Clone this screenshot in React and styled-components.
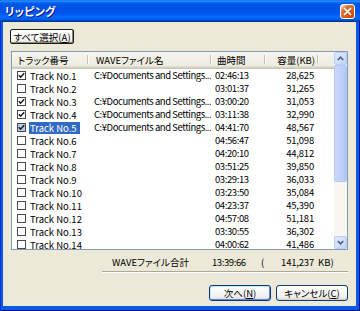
import React from 'react';
import styled, { createGlobalStyle, css } from 'styled-components';

const FONT = `"Noto Sans CJK JP", "Noto Sans", sans-serif`;

const Global = createGlobalStyle`
  html, body { margin: 0; padding: 0; background: #fff; }
  body { font-family: ${FONT}; }
  * { box-sizing: border-box; }
`;

const Window = styled.div`
  width: 360px;
  height: 311px;
  display: flex;
  flex-direction: column;
  font-family: ${FONT};
  font-feature-settings: "palt" 1;
  font-size: 9.5px;
  color: #000;
`;

const TitleBar = styled.div`
  height: 22px;
  flex: none;
  display: flex;
  align-items: center;
  justify-content: space-between;
  padding: 0 5px 0 5px;
  background: linear-gradient(to bottom, #0058ee 0%, #3593ff 4%, #288eff 6%, #127dff 8%, #036ffc 10%, #0262ee 14%, #0057e5 20%, #0054e3 24%, #0055eb 56%, #005bf5 66%, #026afe 76%, #0062ef 86%, #0052d6 92%, #0040ab 94%, #003092 100%);
`;

const TitleText = styled.span`
  color: #fff;
  font-weight: 700;
  font-size: 11px;
  letter-spacing: 0.2px;
  text-shadow: 1px 1px #0f1089;
`;

const CloseButton = styled.div`
  width: 15px;
  height: 15px;
  border: 1px solid #fff;
  border-radius: 3px;
  display: flex;
  align-items: center;
  justify-content: center;
  background: radial-gradient(circle at 90% 90%, #cc4600 0%, #dc6527 55%, #cd7546 70%, #ffccb2 90%, #fff 100%);
`;

const Frame = styled.div`
  flex: 1;
  display: flex;
  padding: 0 4px 5px 3px;
  background: #0a5ae6;
  box-shadow: inset 1px 0 #0831d9, inset -1px 0 #00138c, inset 0 -1px #00138c;
`;

const Body = styled.div`
  flex: 1;
  display: flex;
  flex-direction: column;
  background: #ece9d8;
  padding: 7px 8px 0 8px;
`;

const SelectAll = styled.div`
  align-self: flex-start;
  margin-left: -1px;
  width: 64px;
  height: 15px;
  display: flex;
  align-items: center;
  justify-content: center;
  white-space: nowrap;
  border: 1px solid #1a1a1a;
  border-radius: 2px;
  background: linear-gradient(#fff, #f3f2ee 80%, #dcd8cc);
  box-shadow: inset -1px -1px #8a8778;
`;

const U = styled.span`
  text-decoration: underline;
`;

const ListView = styled.div`
  margin-top: 7px;
  height: 199px;
  border: 1px solid #7f9db9;
  background: #fff;
  display: grid;
  grid-template-columns: 1fr 13px;
  overflow: hidden;
`;

const Table = styled.div`
  display: flex;
  flex-direction: column;
  overflow: hidden;
`;

const cols = css`
  display: grid;
  grid-template-columns: 76px 123px 54px 53px 1fr;
`;

const Header = styled.div`
  ${cols};
  height: 17px;
  flex: none;
  background: linear-gradient(#f6f5f0, #ebeadb);
  box-shadow: inset 0 -1px #cbc7b8, inset 0 -2px #d6d2c2, inset 0 -3px #e2decd;
`;

const HeaderCell = styled.div`
  position: relative;
  display: flex;
  align-items: center;
  padding: 0 ${(p) => (p.$right ? '3px' : '0')} 2px ${(p) => p.$pl || 0}px;
  justify-content: ${(p) => (p.$right ? 'flex-end' : 'flex-start')};
  white-space: nowrap;
  &::after {
    content: '';
    display: ${(p) => (p.$last ? 'none' : 'block')};
    position: absolute;
    right: 0;
    top: 3px;
    bottom: 5px;
    width: 1px;
    background: #c7c5b2;
    box-shadow: 1px 0 #fff;
  }
`;

const Row = styled.div`
  ${cols};
  height: 13px;
  flex: none;
  align-items: center;
`;

const FirstCell = styled.div`
  display: flex;
  align-items: center;
  padding-left: 5px;
  white-space: nowrap;
`;

const Box = styled.div`
  width: 9px;
  height: 9px;
  flex: none;
  border: 1px solid #4a4a4a;
  background: ${(p) => (p.$sel ? '#b7cbf2' : '#fff')};
  display: flex;
  align-items: center;
  justify-content: center;
`;

const Label = styled.span`
  margin-left: 3px;
  padding: 0 3px 0 1px;
  height: 12px;
  line-height: 12px;
  background: ${(p) => (p.$sel ? '#316ac5' : 'transparent')};
  color: ${(p) => (p.$sel ? '#fff' : '#000')};
`;

const Cell = styled.div`
  white-space: nowrap;
  overflow: hidden;
  padding: 0 ${(p) => p.$pr || 0}px 0 ${(p) => p.$pl || 0}px;
  text-align: ${(p) => (p.$right ? 'right' : 'left')};
  letter-spacing: ${(p) => p.$ls || 0}px;
  line-height: 13px;
`;

const Scrollbar = styled.div`
  display: flex;
  flex-direction: column;
  background: #f7f6f1;
`;

const ScrollBtn = styled.div`
  height: 13px;
  flex: none;
  border: 1px solid #bccbf4;
  border-radius: 2px;
  background: linear-gradient(135deg, #e2eafe, #c2d3fc);
  display: flex;
  align-items: center;
  justify-content: center;
`;

const Track = styled.div`
  flex: 1;
  display: flex;
  flex-direction: column;
`;

const Thumb = styled.div`
  height: 117px;
  border: 1px solid #b4c8f6;
  border-radius: 2px;
  background: linear-gradient(90deg, #c9d8fc, #bdd0fa 60%, #b0c6f7);
`;

const Footer = styled.div`
  display: grid;
  grid-template-columns: 101px 100px 49px 8px 45px auto;
  height: 14px;
  line-height: 14px;
  margin-top: 5px;
  white-space: nowrap;
`;

const FooterCell = styled.div`
  text-align: ${(p) => (p.$right ? 'right' : 'left')};
  padding-left: ${(p) => p.$pl || 0}px;
  letter-spacing: ${(p) => p.$ls || 0}px;
`;

const Separator = styled.div`
  margin: 2px 0 0 91px;
  height: 2px;
  border-top: 1px solid #aca899;
  border-bottom: 1px solid #fff;
`;

const ButtonRow = styled.div`
  margin-top: 12px;
  display: flex;
  justify-content: flex-end;
  gap: 5px;
`;

const Button = styled.div`
  width: ${(p) => p.$w}px;
  height: 16px;
  display: flex;
  align-items: center;
  justify-content: center;
  white-space: nowrap;
  border: 1px solid #003c74;
  border-radius: 3px;
  background: linear-gradient(#fff, #f0efea 80%, #d6d0c5);
  box-shadow: ${(p) => (p.$default ? 'inset 1px 1px #cee7ff, inset -1px -1px #6982ee' : 'none')};
`;

const path = 'C:¥Documents and Settings...';
const rows = [
  [1, true, true, '02:46:13', '28,625'],
  [2, false, false, '03:01:37', '31,265'],
  [3, true, true, '03:00:20', '31,053'],
  [4, true, true, '03:11:38', '32,990'],
  [5, true, true, '04:41:70', '48,567'],
  [6, false, false, '04:56:47', '51,098'],
  [7, false, false, '04:20:10', '44,812'],
  [8, false, false, '03:51:25', '39,850'],
  [9, false, false, '03:29:13', '36,033'],
  [10, false, false, '03:23:50', '35,084'],
  [11, false, false, '04:23:37', '45,390'],
  [12, false, false, '04:57:08', '51,181'],
  [13, false, false, '03:30:55', '36,302'],
  [14, false, false, '04:00:62', '41,486'],
];

const Check = () => (
  <svg width="7" height="7" viewBox="0 0 7 7">
    <path d="M0.8 3.2 L2.6 5.2 L6.2 1.2" fill="none" stroke="#1a1a1a" strokeWidth="1.5" />
  </svg>
);

const Arrow = ({ down }) => (
  <svg width="7" height="5" viewBox="0 0 7 5">
    <path d={down ? 'M0.8 1 L3.5 3.8 L6.2 1' : 'M0.8 4 L3.5 1.2 L6.2 4'} fill="none" stroke="#4d6185" strokeWidth="1.6" />
  </svg>
);

export default function App() {
  return (
    <>
      <Global />
      <Window>
        <TitleBar>
          <TitleText>リッピング</TitleText>
          <CloseButton>
            <svg width="9" height="9" viewBox="0 0 9 9">
              <path d="M1 1 L8 8 M8 1 L1 8" stroke="#fff" strokeWidth="1.7" />
            </svg>
          </CloseButton>
        </TitleBar>
        <Frame>
          <Body>
            <SelectAll>
              すべて選択(<U>A</U>)
            </SelectAll>
            <ListView>
              <Table>
                <Header>
                  <HeaderCell $pl={6}>トラック番号</HeaderCell>
                  <HeaderCell $pl={8}>WAVEファイル名</HeaderCell>
                  <HeaderCell $pl={6}>曲時間</HeaderCell>
                  <HeaderCell $right>容量(KB)</HeaderCell>
                  <HeaderCell $last />
                </Header>
                {rows.map(([n, checked, hasPath, time, size]) => {
                  const sel = n === 5;
                  return (
                    <Row key={n}>
                      <FirstCell>
                        <Box $sel={sel}>{checked && <Check />}</Box>
                        <Label $sel={sel}>Track No.{n}</Label>
                      </FirstCell>
                      <Cell $pl={6} $ls={-0.45}>{hasPath ? path : ''}</Cell>
                      <Cell $pl={4} $ls={-0.4}>{time}</Cell>
                      <Cell $right $pr={4} $ls={-0.2}>{size}</Cell>
                      <Cell />
                    </Row>
                  );
                })}
              </Table>
              <Scrollbar>
                <ScrollBtn><Arrow /></ScrollBtn>
                <Track>
                  <Thumb />
                </Track>
                <ScrollBtn><Arrow down /></ScrollBtn>
              </Scrollbar>
            </ListView>
            <Footer>
              <FooterCell />
              <FooterCell>WAVEファイル合計</FooterCell>
              <FooterCell $ls={-0.4}>13:39:66</FooterCell>
              <FooterCell>(</FooterCell>
              <FooterCell $right $ls={-0.2}>141,237</FooterCell>
              <FooterCell $pl={4}>KB)</FooterCell>
            </Footer>
            <Separator />
            <ButtonRow>
              <Button $w={62} $default>次へ(<U>N</U>)</Button>
              <Button $w={72}>キャンセル(<U>C</U>)</Button>
            </ButtonRow>
          </Body>
        </Frame>
      </Window>
    </>
  );
}
